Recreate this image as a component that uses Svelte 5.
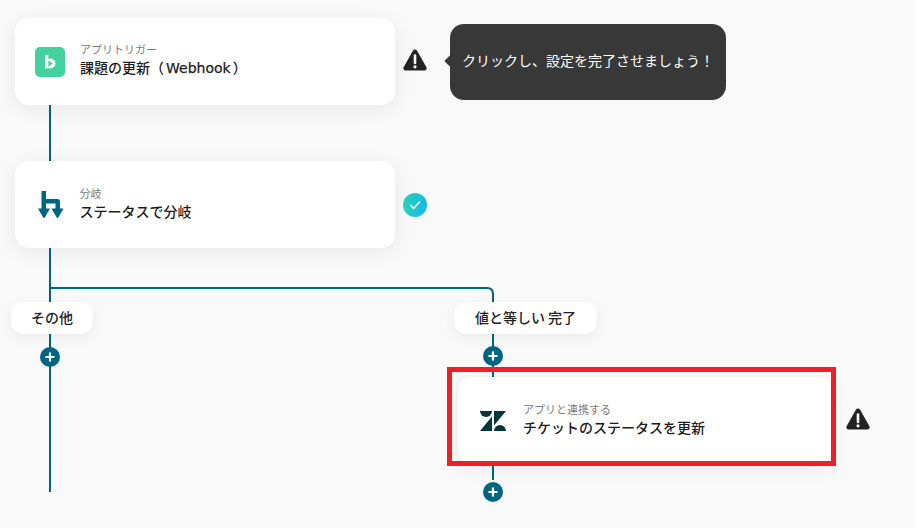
<script>
  const plusNodes = [
    { x: 50, y: 357 },
    { x: 493, y: 356 },
    { x: 493, y: 492 }
  ];

  const warnings = [
    { x: 403, y: 48 },
    { x: 846, y: 407 }
  ];
</script>

<div class="canvas">
  <!-- connectors -->
  <svg class="wires" width="915" height="528" viewBox="0 0 915 528" fill="none">
    <path d="M50 105V161M50 248V492M50 288H487Q493 288 493 294V480" stroke="#00657f" stroke-width="2" />
  </svg>

  <div class="card node-trigger">
    <svg class="icon" width="30" height="30" viewBox="0 0 30 30">
      <rect width="30" height="30" rx="5" fill="#43d1a0" />
      <path d="M10 8h3.400v3.900a5.200 5.200 0 0 1 2-.4 5 5 0 0 1 5 5 5 5 0 0 1-5 5 5 5 0 0 1-2.400-.6L10 22z" fill="#fff" />
      <path d="M13.400 13.500v6l4.600-3z" fill="#43d1a0" />
    </svg>
    <div class="text">
      <span class="sub">アプリトリガー</span>
      <span class="title">課題の更新（<span class="latin">Webhook</span>）</span>
    </div>
  </div>

  <div class="card node-branch">
    <svg class="icon" width="26" height="27" viewBox="0 0 26 27" fill="#00657f">
      <path d="M3.500 0H8v8h11.500a2.500 2.500 0 0 1 2.500 2.500V18h-4.500v-5.500H8V18H3.500z" />
      <path d="M0 17.500h12L6.800 26.500a1 1 0 0 1-1.600 0z" />
      <path d="M13.500 17.500h12l-5.200 9a1 1 0 0 1-1.600 0z" />
    </svg>
    <div class="text">
      <span class="sub">分岐</span>
      <span class="title">ステータスで分岐</span>
    </div>
  </div>

  <div class="card node-zendesk">
    <svg class="icon" width="26" height="20" viewBox="0 0 26 20" fill="#03363d">
      <path d="M12 5.500V20H0z" />
      <path d="M12 0A6 6 0 0 1 0 0z" />
      <path d="M14 14.500V0h12z" />
      <path d="M14 20a6 6 0 0 1 12 0z" />
    </svg>
    <div class="text">
      <span class="sub">アプリと連携する</span>
      <span class="title">チケットのステータスを更新</span>
    </div>
  </div>
  <div class="highlight"></div>

  <div class="pill pill-other">その他</div>
  <div class="pill pill-match">値と等しい 完了</div>

  {#each plusNodes as p}
    <svg class="plus" style="left:{p.x - 10}px;top:{p.y - 10}px" width="20" height="20" viewBox="0 0 20 20">
      <circle cx="10" cy="10" r="10" fill="#00657f" />
      <path d="M10 6.300v7.400M6.300 10h7.400" stroke="#fff" stroke-width="2.200" stroke-linecap="round" />
    </svg>
  {/each}

  {#each warnings as w}
    <svg class="warn" style="left:{w.x}px;top:{w.y}px" width="24" height="24" viewBox="0 0 24 24">
      <path d="M12 1.500a2.500 2.500 0 0 1 2.100 1.200l9.300 16.500a2.300 2.300 0 0 1-2 3.300H2.600a2.300 2.300 0 0 1-2-3.300L9.900 2.700A2.500 2.500 0 0 1 12 1.500z" fill="#222" />
      <path d="M12 7.500v7.500" stroke="#fff" stroke-width="2.600" stroke-linecap="round" />
      <circle cx="12" cy="18.800" r="1.600" fill="#fff" />
    </svg>
  {/each}

  <svg class="check" width="24" height="24" viewBox="0 0 24 24">
    <defs>
      <linearGradient id="done" x1="0" y1="0.500" x2="1" y2="0.500">
        <stop offset="0" stop-color="#2bd3b5" />
        <stop offset="1" stop-color="#12b8ee" />
      </linearGradient>
    </defs>
    <circle cx="12" cy="12" r="12" fill="url(#done)" />
    <path d="M7.500 12.300l3.100 3.100L16.500 9" stroke="#fff" stroke-width="1.500" fill="none" stroke-linecap="round" stroke-linejoin="round" />
  </svg>

  <div class="tooltip">クリックし、設定を完了させましょう！</div>
</div>

<style>
  :global(body) {
    background: #f9f9f9;
    overflow: hidden;
  }

  .canvas {
    position: relative;
    width: 915px;
    height: 528px;
    font-family: "Noto Sans CJK JP", "Noto Sans", sans-serif;
    color: #222;
  }

  .wires {
    position: absolute;
    left: 0;
    top: 0;
  }

  .card {
    position: absolute;
    display: flex;
    align-items: center;
    box-sizing: border-box;
    height: 87px;
    background: #fff;
    border-radius: 14px;
    box-shadow: 0 4px 20px rgba(0, 0, 0, 0.07);
  }

  .node-trigger {
    left: 15px;
    top: 18px;
    width: 380px;
    padding-left: 20px;
    gap: 15px;
  }

  .node-branch {
    left: 15px;
    top: 161px;
    width: 380px;
    padding-left: 22.500px;
    gap: 16px;
  }

  .node-zendesk {
    left: 458px;
    top: 377px;
    width: 374px;
    padding-left: 22px;
    gap: 17px;
  }

  .text {
    display: flex;
    flex-direction: column;
    padding-bottom: 4px;
  }

  .sub {
    font-size: 11px;
    line-height: 16px;
    color: #7b7b7b;
  }

  .title {
    font-size: 14px;
    line-height: 20px;
    font-weight: 500;
    color: #1c1c1c;
  }

  /* the latin run is wider than Noto's in the reference */
  .latin {
    font-family: "DejaVu Sans", sans-serif;
    margin: 0 2px;
    -webkit-text-stroke: 0.25px #1c1c1c;
  }

  .highlight {
    position: absolute;
    left: 447px;
    top: 367px;
    width: 389px;
    height: 99px;
    box-sizing: border-box;
    border: 5px solid #ec2027;
  }

  .pill {
    position: absolute;
    top: 302px;
    height: 32px;
    padding-bottom: 2px;
    box-sizing: border-box;
    display: flex;
    align-items: center;
    justify-content: center;
    background: #fff;
    border-radius: 12px;
    font-size: 14px;
    font-weight: 500;
    box-shadow: 0 4px 14px rgba(0, 0, 0, 0.06);
  }

  .pill-other {
    left: 11px;
    width: 82px;
  }

  .pill-match {
    left: 454px;
    width: 143px;
  }

  .plus,
  .warn,
  .check {
    position: absolute;
  }

  .check {
    left: 403px;
    top: 193px;
  }

  .tooltip {
    position: absolute;
    left: 450px;
    top: 24px;
    width: 276px;
    height: 76px;
    box-sizing: border-box;
    display: flex;
    align-items: center;
    padding: 0 0 4px 12px;
    background: #383838;
    border-radius: 14px;
    color: #fff;
    font-size: 14px;
  }

  .tooltip::before {
    content: "";
    position: absolute;
    left: -4px;
    top: 33px;
    width: 8px;
    height: 8px;
    background: #383838;
    transform: rotate(45deg);
    border-radius: 1px;
  }
</style>
